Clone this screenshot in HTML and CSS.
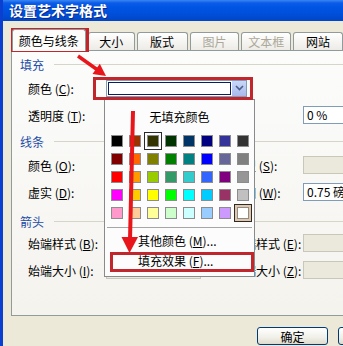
FILE: index.html
```html
<!DOCTYPE html>
<html lang="zh-CN">
  <head>
    <meta charset="UTF-8" />
    <title>设置艺术字格式</title>
    <link rel="stylesheet" href="styles.css">
  </head>
  <body>
    <div class="window">
      <div class="titlebar">设置艺术字格式</div>
      <div class="client">
        <div class="tabs">
          <div class="tab sel">颜色与线条</div>
          <div class="tab">大小</div>
          <div class="tab">版式</div>
          <div class="tab off">图片</div>
          <div class="tab off">文本框</div>
          <div class="tab">网站</div>
        </div>

        <div class="panel">
          <div class="group">
            <div class="group-head">填充</div>
            <div class="row">
              <span class="lbl">颜色 (<u>C</u>):</span>
              <div class="combo combo-wide">
                <span class="combo-field"></span>
                <span class="combo-btn">
                  <svg width="9" height="6" viewBox="0 0 9 6"><path d="M1 1 L4.5 4.5 L8 1" fill="none" stroke="#4a5f8c" stroke-width="1.6"/></svg>
                </span>
              </div>
            </div>
            <div class="row">
              <span class="lbl">透明度 (<u>T</u>):</span>
              <span class="field rcol">0 %</span>
            </div>
          </div>

          <div class="group g-line">
            <div class="group-head">线条</div>
            <div class="row">
              <span class="lbl">颜色 (<u>O</u>):</span>
              <span class="field"></span>
              <span class="rlbl">线型 (<u>S</u>):</span>
              <span class="field off"></span>
            </div>
            <div class="row">
              <span class="lbl">虚实 (<u>D</u>):</span>
              <span class="field"></span>
              <span class="rlbl">粗细 (<u>W</u>):</span>
              <span class="field">0.75 磅</span>
            </div>
          </div>

          <div class="group g-arrow">
            <div class="group-head">箭头</div>
            <div class="row">
              <span class="lbl">始端样式 (<u>B</u>):</span>
              <span class="field off"></span>
              <span class="rlbl">末端样式 (<u>E</u>):</span>
              <span class="field off"></span>
            </div>
            <div class="row">
              <span class="lbl">始端大小 (<u>I</u>):</span>
              <span class="field off"></span>
              <span class="rlbl">末端大小 (<u>Z</u>):</span>
              <span class="field off"></span>
            </div>
          </div>
        </div>

        <div class="buttons">
          <button class="btn">确定</button>
          <button class="btn">取消</button>
        </div>
      </div>
    </div>

    <!-- dropdown opened from the fill colour combo -->
    <div class="popup">
      <div class="nofill">无填充颜色</div>
      <div class="palette">
        <span class="cell"><i style="background:#000000"></i></span>
        <span class="cell"><i style="background:#993300"></i></span>
        <span class="cell sel"><i style="background:#333300"></i></span>
        <span class="cell"><i style="background:#003300"></i></span>
        <span class="cell"><i style="background:#003366"></i></span>
        <span class="cell"><i style="background:#000080"></i></span>
        <span class="cell"><i style="background:#333399"></i></span>
        <span class="cell"><i style="background:#333333"></i></span>

        <span class="cell"><i style="background:#800000"></i></span>
        <span class="cell"><i style="background:#ff6600"></i></span>
        <span class="cell"><i style="background:#808000"></i></span>
        <span class="cell"><i style="background:#008000"></i></span>
        <span class="cell"><i style="background:#008080"></i></span>
        <span class="cell"><i style="background:#0000ff"></i></span>
        <span class="cell"><i style="background:#666699"></i></span>
        <span class="cell"><i style="background:#808080"></i></span>

        <span class="cell"><i style="background:#ff0000"></i></span>
        <span class="cell"><i style="background:#ff9900"></i></span>
        <span class="cell"><i style="background:#99cc00"></i></span>
        <span class="cell"><i style="background:#339966"></i></span>
        <span class="cell"><i style="background:#33cccc"></i></span>
        <span class="cell"><i style="background:#3366ff"></i></span>
        <span class="cell"><i style="background:#800080"></i></span>
        <span class="cell"><i style="background:#969696"></i></span>

        <span class="cell"><i style="background:#ff00ff"></i></span>
        <span class="cell"><i style="background:#ffcc00"></i></span>
        <span class="cell"><i style="background:#ffff00"></i></span>
        <span class="cell"><i style="background:#00ff00"></i></span>
        <span class="cell"><i style="background:#00ffff"></i></span>
        <span class="cell"><i style="background:#00ccff"></i></span>
        <span class="cell"><i style="background:#993366"></i></span>
        <span class="cell"><i style="background:#c0c0c0"></i></span>

        <span class="cell"><i style="background:#ff99cc"></i></span>
        <span class="cell"><i style="background:#ffcc99"></i></span>
        <span class="cell"><i style="background:#ffff99"></i></span>
        <span class="cell"><i style="background:#ccffcc"></i></span>
        <span class="cell"><i style="background:#ccffff"></i></span>
        <span class="cell"><i style="background:#99ccff"></i></span>
        <span class="cell"><i style="background:#cc99ff"></i></span>
        <span class="cell hot"><i style="background:#ffffff"></i></span>
      </div>
      <div class="sep"></div>
      <div class="item">其他颜色 (<u>M</u>)...</div>
      <div class="item">填充效果 (<u>F</u>)...</div>
    </div>

    <!-- tutorial markings -->
    <div class="mark mark-tab"></div>
    <div class="mark mark-combo"></div>
    <div class="mark mark-effect"></div>
    <svg class="arrows" width="343" height="346" viewBox="0 0 343 346">
      <line x1="78" y1="56" x2="97" y2="69.5" stroke="#e8151b" stroke-width="3.5"/>
      <polygon points="106,76 92.5,74 99.8,63.8" fill="#e8151b"/>
      <line x1="133" y1="111" x2="130" y2="240" stroke="#e8151b" stroke-width="4"/>
      <polygon points="121.5,237 138,237 129.5,253" fill="#e8151b"/>
    </svg>
  </body>
</html>
```

FILE: styles.css
```css
* {
  box-sizing: border-box;
}
body {
  position: relative;
  margin: 0;
  width: 343px;
  height: 346px;
  overflow: hidden;
  font-family: "Noto Sans CJK SC", sans-serif;
  font-size: 12px;
  color: #000;
  background: #ece9d8;
}
u {
  text-decoration: underline;
}

/* window frame */
.window {
  height: 346px;
  border-left: 3px solid #0a3fd0;
}
.titlebar {
  height: 21px;
  padding-left: 6px;
  line-height: 21px;
  font-size: 14px;
  font-weight: bold;
  color: #fff;
  text-shadow: 1px 1px #0c2a8a;
  background: linear-gradient(#3a86f2 0, #0a5ce8 3px, #0055e3 7px, #004fda 14px, #0045c6 21px);
}
.client {
  padding-top: 8px;
}

/* tabs */
.tabs {
  display: flex;
  align-items: flex-end;
  gap: 2px;
  height: 21px;
  padding-left: 9px;
}
.tab {
  position: relative;
  width: 52px;
  height: 18px;
  border: 1px solid #919b9c;
  border-bottom: none;
  border-radius: 3px 3px 0 0;
  text-align: center;
  line-height: 17px;
  background: linear-gradient(#ffffff, #ecebe6);
}
.tab:nth-child(1) {
  width: 77px;
}
.tab:nth-child(2) {
  width: 49px;
}
.tab:nth-child(3) {
  width: 53px;
}
.tab.sel {
  height: 22px;
  margin-bottom: -1px;
  line-height: 21px;
  background: #fcfcfb;
  z-index: 1;
}
.tab.off {
  color: #aca899;
}

/* tab page */
.panel {
  width: 400px;
  height: 266px;
  margin-left: 8px;
  padding-top: 5px;
  border: 1px solid #919b9c;
  background: linear-gradient(#fcfcfb, #f4f3ee);
}
.group-head {
  display: flex;
  align-items: center;
  height: 16px;
  margin-bottom: 4px;
  padding-left: 8px;
  color: #1e4ca6;
}
.group-head::after {
  content: "";
  flex: 1;
  margin-left: 10px;
  border-top: 1px solid #d6d5c8;
}
.g-line {
  margin-top: 6px;
}
.g-arrow {
  margin-top: 9px;
}
.g-arrow .group-head {
  margin-bottom: 2px;
}
.row {
  display: grid;
  grid-template-columns: 78px 95px 31px 71px 80px;
  align-items: center;
  height: 24px;
  padding-left: 16px;
}
.row + .row {
  margin-top: 3px;
}
.rlbl {
  grid-column: 4;
}
.rcol {
  grid-column: 5;
}
.field {
  height: 18px;
  padding-left: 3px;
  line-height: 16px;
  border: 1px solid #7f9db9;
  background: #fff;
  white-space: nowrap;
}
.field.off {
  border-color: #c9c7ba;
  background: #ebe8dc;
}

/* fill colour combo */
.combo {
  display: flex;
  height: 17px;
  border: 1px solid #7f9db9;
  background: #fff;
}
.combo-wide {
  grid-column: 2 / 5;
  width: 141px;
}
.combo-field {
  flex: 1;
  margin: 1px;
  border: 1px solid #0d1f5a;
}
.combo-btn {
  display: flex;
  align-items: center;
  justify-content: center;
  width: 14px;
  background: linear-gradient(#cbd7f8, #a7b9ec);
}

/* bottom buttons */
.buttons {
  display: flex;
  gap: 10px;
  margin-top: 11px;
  padding-left: 254px;
}
.btn {
  flex: none;
  width: 71px;
  height: 18px;
  padding: 0;
  font-family: inherit;
  font-size: 12px;
  line-height: 15px;
  border: 1px solid #003c74;
  border-radius: 3px;
  background: linear-gradient(#ffffff, #f0efe8 60%, #dedbcd);
}

/* colour popup */
.popup {
  position: absolute;
  left: 104px;
  top: 99px;
  width: 151px;
  height: 178px;
  border: 1px solid #8a8a8a;
  background: #fcfcfc;
}
.nofill {
  margin-top: 8px;
  line-height: 18px;
  text-align: center;
}
.palette {
  display: grid;
  grid-template-columns: repeat(8, 18px);
  grid-auto-rows: 18px;
  margin: 6px 0 0 3px;
}
.cell {
  display: flex;
  align-items: center;
  justify-content: center;
  border: 1px solid transparent;
}
.cell i {
  width: 12px;
  height: 12px;
  border: 1px solid #8c8c8c;
}
.cell.sel {
  border-color: #2a2a2a;
}
.cell.hot {
  border-color: #2a2a2a;
  background: #e3c6a8;
}
.sep {
  margin: 5px 2px 0;
  border-top: 1px solid #a6a6a6;
}
.item {
  height: 20px;
  padding-left: 33px;
  line-height: 20px;
}
.sep + .item {
  margin-top: 3px;
}

/* red highlight boxes and arrows */
.mark {
  position: absolute;
  border: 3px solid #c0262c;
}
.mark-tab {
  left: 11px;
  top: 28px;
  width: 78px;
  height: 24px;
}
.mark-combo {
  left: 93px;
  top: 77px;
  width: 160px;
  height: 23px;
}
.mark-effect {
  left: 110px;
  top: 252px;
  width: 144px;
  height: 20px;
}
.arrows {
  position: absolute;
  left: 0;
  top: 0;
  pointer-events: none;
}
```
